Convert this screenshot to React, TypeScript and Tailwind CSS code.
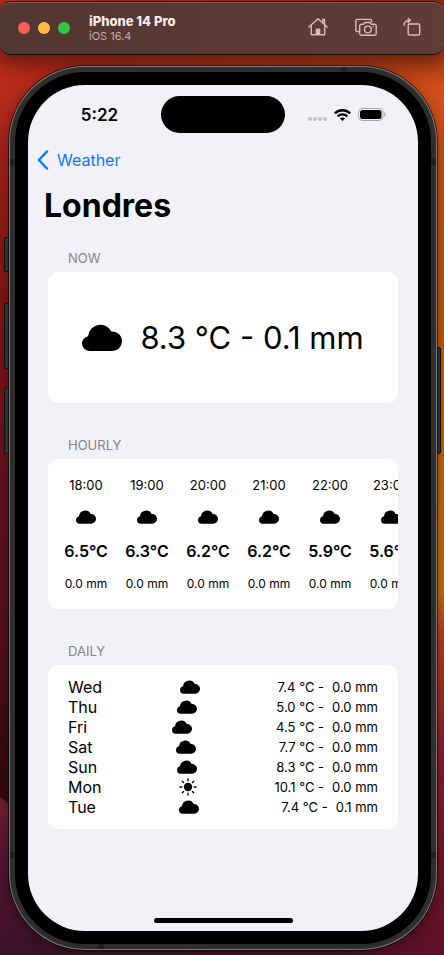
import React from "react";

type Condition = "cloud" | "sun";

const hourly = [
  { time: "18:00", temp: "6.5°C", rain: "0.0 mm" },
  { time: "19:00", temp: "6.3°C", rain: "0.0 mm" },
  { time: "20:00", temp: "6.2°C", rain: "0.0 mm" },
  { time: "21:00", temp: "6.2°C", rain: "0.0 mm" },
  { time: "22:00", temp: "5.9°C", rain: "0.0 mm" },
  { time: "23:00", temp: "5.6°C", rain: "0.0 mm" },
];

const daily: { day: string; icon: Condition; temp: string; rain: string }[] = [
  { day: "Wed", icon: "cloud", temp: "7.4 °C -", rain: "0.0 mm" },
  { day: "Thu", icon: "cloud", temp: "5.0 °C -", rain: "0.0 mm" },
  { day: "Fri", icon: "cloud", temp: "4.5 °C -", rain: "0.0 mm" },
  { day: "Sat", icon: "cloud", temp: "7.7 °C -", rain: "0.0 mm" },
  { day: "Sun", icon: "cloud", temp: "8.3 °C -", rain: "0.0 mm" },
  { day: "Mon", icon: "sun", temp: "10.1 °C -", rain: "0.0 mm" },
  { day: "Tue", icon: "cloud", temp: "7.4 °C -", rain: "0.1 mm" },
];

function Cloud({ className }: { className: string }) {
  return (
    <svg viewBox="0 0 40 27" className={className} fill="currentColor" aria-hidden="true">
      <path d="M7.400 27A7.400 7.400 0 0 1 0 19.600C0 16 2.500 13 6 12.200A12.400 12.400 0 0 1 29.400 7.500C35.500 7.200 40 11.600 40 17.200A9.800 9.800 0 0 1 30.200 27Z" />
    </svg>
  );
}

function Sun({ className }: { className: string }) {
  return (
    <svg viewBox="0 0 18 18" className={className} aria-hidden="true">
      <circle cx="9" cy="9" r="4.200" fill="currentColor" />
      <g stroke="currentColor" strokeWidth="1.400" strokeLinecap="round">
        <path d="M9 .9v1.900M9 15.200v1.900M.9 9h1.900M15.200 9h1.900M3.300 3.300l1.300 1.300M13.400 13.400l1.300 1.300M3.300 14.700l1.300-1.300M13.400 4.600l1.300-1.300" />
      </g>
    </svg>
  );
}

function Wallpaper() {
  return (
    <svg
      viewBox="0 0 444 955"
      preserveAspectRatio="none"
      className="absolute inset-0 -z-10 h-full w-full"
      aria-hidden="true"
    >
      <defs>
        <linearGradient id="left" x1="0" y1="0" x2="0" y2="1">
          <stop offset="0" stopColor="#c8321a" />
          <stop offset="0.12" stopColor="#b3281c" />
          <stop offset="0.27" stopColor="#8a1812" />
          <stop offset="0.42" stopColor="#78121a" />
          <stop offset="0.5" stopColor="#661220" />
          <stop offset="0.68" stopColor="#52101a" />
          <stop offset="0.83" stopColor="#330a0a" />
          <stop offset="1" stopColor="#4a1010" />
        </linearGradient>
        <linearGradient id="right" x1="0" y1="0" x2="0" y2="1">
          <stop offset="0" stopColor="#a82a14" />
          <stop offset="0.1" stopColor="#d2501c" />
          <stop offset="0.3" stopColor="#c2580f" />
          <stop offset="0.62" stopColor="#c87010" />
          <stop offset="0.66" stopColor="#c04020" />
          <stop offset="0.78" stopColor="#8e1f2c" />
          <stop offset="1" stopColor="#5c1028" />
        </linearGradient>
        <linearGradient id="blend" x1="0" y1="0" x2="1" y2="0">
          <stop offset="0.2" stopColor="#fff" stopOpacity="0" />
          <stop offset="0.85" stopColor="#fff" />
        </linearGradient>
        <linearGradient id="plum" x1="0" y1="0" x2="0" y2="1">
          <stop offset="0" stopColor="#7a2038" />
          <stop offset="0.4" stopColor="#551530" />
          <stop offset="1" stopColor="#3c1228" />
        </linearGradient>
        <mask id="fade">
          <rect width="444" height="955" fill="url(#blend)" />
        </mask>
      </defs>
      <rect width="444" height="955" fill="url(#left)" />
      <rect width="444" height="955" fill="url(#right)" mask="url(#fade)" />
      <path d="M0 797C50 835 130 900 180 955H0Z" fill="url(#plum)" />
    </svg>
  );
}

function Toolbar() {
  return (
    <header className="mt-px flex h-[54px] items-center rounded-[10px] border-y border-t-[#2a1512] border-b-[#150a08] bg-linear-to-r from-[#533732] to-[#5f3d36] pr-[23px] pl-[18px] shadow-[inset_0_1px_0_#7d625c,0_6px_20px_4px_rgba(0,0,0,0.45)]">
      <div className="flex gap-2">
        <button aria-label="Close" className="size-3 rounded-full bg-[#fe5f58]" />
        <button aria-label="Minimize" className="size-3 rounded-full bg-[#febb40]" />
        <button aria-label="Zoom" className="size-3 rounded-full bg-[#33c748]" />
      </div>
      <div className="ml-[19px] flex-1">
        <h1 className="text-[13px] leading-4 font-extrabold text-[#f6eceb]">iPhone 14 Pro</h1>
        <p className="text-[11px] leading-[14px] text-[#c7aaa5]">iOS 16.4</p>
      </div>
      <div className="flex items-center gap-[26px] pb-0.5 text-[#dcbcb5]">
        <button aria-label="Home">
          <svg viewBox="0 0 22 20" className="h-5 w-[22px]" fill="none" stroke="currentColor" strokeWidth="1.400" strokeLinecap="round" strokeLinejoin="round">
            <path d="M1.800 10 11 1.800 20.200 10M4.300 8.500v9.300h13.400V8.500M15.700 5.200V2.500h1.800v4.600" />
            <path d="M8.700 17.500V12.500q0-1 1-1h2.600q1 0 1 1v5Z" fill="currentColor" stroke="none" />
          </svg>
        </button>
        <button aria-label="Screenshot">
          <svg viewBox="0 0 22 20" className="h-5 w-[22px]" fill="none" stroke="currentColor" strokeWidth="1.400" strokeLinecap="round" strokeLinejoin="round">
            <path d="M3.600 14.500H2.400A1.600 1.600 0 0 1 .8 12.900V4A1.600 1.600 0 0 1 2.400 2.400H15A1.600 1.600 0 0 1 16.600 4v.6" />
            <path d="M6.400 7.200h2.200l1.300-1.700h5.200l1.300 1.700h3A1.700 1.700 0 0 1 21.200 8.900v7.700a1.700 1.700 0 0 1-1.700 1.700H6.400a1.700 1.700 0 0 1-1.700-1.700V8.900a1.700 1.700 0 0 1 1.700-1.700Z" />
            <circle cx="12.900" cy="12.500" r="3.400" />
            <circle cx="18.300" cy="9.800" r=".7" fill="currentColor" stroke="none" />
          </svg>
        </button>
        <button aria-label="Rotate">
          <svg viewBox="1 0 18 20" className="h-5 w-[18px]" fill="none" stroke="currentColor" strokeWidth="1.400" strokeLinecap="round" strokeLinejoin="round">
            <rect x="6.200" y="7" width="11.500" height="11" rx="1.300" />
            <path d="M2 8.400C2 5.200 3.500 3.500 8 3.500M6.200 1.400 8.300 3.500 6.200 5.600" />
          </svg>
        </button>
      </div>
    </header>
  );
}

function StatusBar() {
  return (
    <div className="grid h-[53px] grid-cols-[1fr_124px_1fr] items-start pt-[11px]">
      <p className="flex h-[37px] items-center justify-center pt-px pl-2.5 text-[17px] leading-6 font-semibold">5:22</p>
      <div className="h-[37px] rounded-full bg-black" />
      <div className="flex h-[37px] items-center justify-end gap-[7px] pr-8">
        <div className="flex gap-px pt-2">
          <i className="size-1 rounded-full bg-[#c2c2c6]" />
          <i className="size-1 rounded-full bg-[#c2c2c6]" />
          <i className="size-1 rounded-full bg-[#c2c2c6]" />
          <i className="size-1 rounded-full bg-[#c2c2c6]" />
        </div>
        <svg viewBox="0 0 17 12" className="h-3 w-[17px]" fill="none" stroke="#000" strokeWidth="2.300" aria-hidden="true">
          <path d="M.8 4.300C5.200.2 11.800.2 16.200 4.300" />
          <path d="M3.600 7.300c2.800-2.600 7-2.600 9.800 0" />
          <path d="M8.500 12 5.900 9.400c1.500-1.300 3.700-1.300 5.200 0Z" fill="#000" stroke="none" />
        </svg>
        <svg viewBox="0 0 28 13" className="h-[13px] w-7" aria-hidden="true">
          <rect x=".5" y=".5" width="24.500" height="12" rx="3.800" fill="none" stroke="#a9a9ad" />
          <rect x="2" y="2" width="21.500" height="9" rx="2.500" fill="#000" />
          <path d="M26.200 4.300c1.900.8 1.900 3.600 0 4.400Z" fill="#a9a9ad" />
        </svg>
      </div>
    </div>
  );
}

function Section({ title, children }: { title: string; children: React.ReactNode }) {
  return (
    <section>
      <h3 className="mb-[5px] pl-5 text-[13px] leading-[18px] text-[#85858a]">{title}</h3>
      <div className="overflow-hidden rounded-[10px] bg-white">{children}</div>
    </section>
  );
}

function Screen() {
  return (
    <main className="flex flex-1 flex-col overflow-hidden rounded-[57px] bg-[#f2f1f7] text-black">
      <StatusBar />
      <nav className="flex h-11 items-center pl-[9px]">
        <button className="flex items-center gap-2 text-base text-[#0a7aff]">
          <svg viewBox="0 0 12 20" className="h-5 w-3" fill="none" stroke="currentColor" strokeWidth="2.500" strokeLinecap="round" strokeLinejoin="round" aria-hidden="true">
            <path d="M10 1.500 1.800 10l8.200 8.500" />
          </svg>
          Weather
        </button>
      </nav>
      <h2 className="pl-4 text-[32px] leading-[48px] font-bold">Londres</h2>
      <div className="mt-[19px] flex flex-col gap-[33px] px-5">
        <Section title="NOW">
          <div className="flex h-[131px] items-center justify-center gap-[18px]">
            <Cloud className="h-[27px] w-10" />
            <p className="text-[31px] leading-10">8.3 °C - 0.1 mm</p>
          </div>
        </Section>
        <Section title="HOURLY">
          <ul className="flex gap-[17px] overflow-hidden pt-[17px] pb-[19px] pl-4">
            {hourly.map((hour) => (
              <li key={hour.time} className="flex w-11 shrink-0 flex-col items-center gap-4 whitespace-nowrap">
                <span className="text-[13px] leading-[18px]">{hour.time}</span>
                <Cloud className="h-3.5 w-5" />
                <span className="text-base leading-[22px] font-semibold">{hour.temp}</span>
                <span className="text-xs leading-3">{hour.rain}</span>
              </li>
            ))}
          </ul>
        </Section>
        <Section title="DAILY">
          <ul className="px-5 py-3">
            {daily.map((item) => (
              <li key={item.day} className="flex h-5 items-center justify-between text-base leading-5">
                <span>{item.day}</span>
                {item.icon === "cloud" ? <Cloud className="h-3.5 w-5" /> : <Sun className="size-[18px]" />}
                <span className="flex gap-2 text-[13px]">
                  <span>{item.temp}</span>
                  <span>{item.rain}</span>
                </span>
              </li>
            ))}
          </ul>
        </Section>
      </div>
      <div className="mx-auto mt-auto mb-2 h-[5px] w-[139px] rounded-full bg-black" />
    </main>
  );
}

function SideKeys() {
  return (
    <>
      <i className="absolute top-[171px] -left-[5px] h-[35px] w-[5px] rounded-l-xs border border-[#111] bg-[#303030]" />
      <i className="absolute top-[237px] -left-[5px] h-[66px] w-[5px] rounded-l-xs border border-[#111] bg-[#303030]" />
      <i className="absolute top-[321px] -left-[5px] h-[67px] w-[5px] rounded-l-xs border border-[#111] bg-[#303030]" />
      <i className="absolute top-[281px] -right-[4px] h-[107px] w-[4px] rounded-r-xs border border-[#111] bg-[#303030]" />
      <i className="absolute top-px right-[90px] h-[5px] w-1.5 bg-[#1f1f1f]" />
      <i className="absolute bottom-px left-[89px] h-[5px] w-1.5 bg-[#1f1f1f]" />
      <i className="absolute top-[93px] left-px h-1.5 w-[5px] bg-[#1f1f1f]" />
      <i className="absolute top-[93px] right-px h-1.5 w-[5px] bg-[#1f1f1f]" />
      <i className="absolute bottom-[92px] left-px h-1.5 w-[5px] bg-[#1f1f1f]" />
      <i className="absolute right-px bottom-[92px] h-1.5 w-[5px] bg-[#1f1f1f]" />
    </>
  );
}

export default function App() {
  return (
    <div className="relative isolate flex min-h-screen flex-col overflow-hidden font-['Inter','Liberation_Sans',sans-serif]">
      <Wallpaper />
      <Toolbar />
      <div className="relative mt-[11px] mr-[7px] mb-[5px] ml-[9px] flex flex-1 flex-col rounded-[76px] bg-[#7c7c7c] p-px shadow-[0_0_0_1px_rgba(0,0,0,0.6),0_4px_18px_rgba(0,0,0,0.4)]">
        <div className="flex flex-1 flex-col rounded-[75px] bg-[#2e2e2e] p-[5px]">
          <div className="flex flex-1 flex-col rounded-[70px] bg-black p-[13px]">
            <Screen />
          </div>
        </div>
        <SideKeys />
      </div>
    </div>
  );
}
